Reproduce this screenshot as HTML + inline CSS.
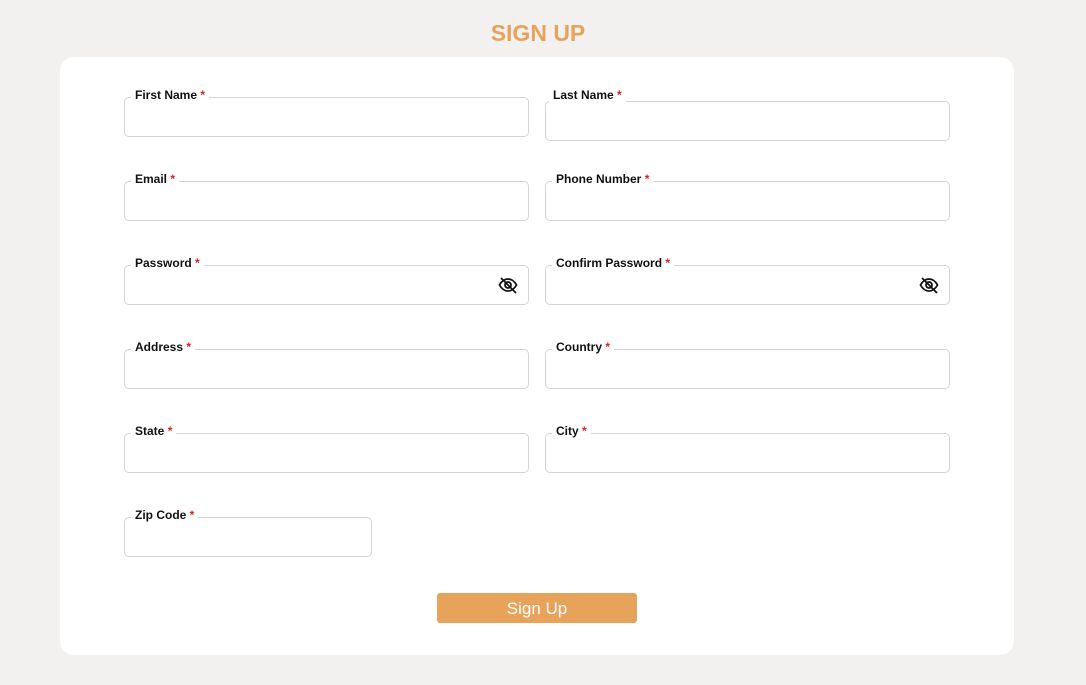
<!DOCTYPE html>
<html><head><style>
body{margin:0;width:1086px;height:685px;background:#f2f1f0;font-family:"Liberation Sans",sans-serif;position:relative;overflow:hidden}
h1{position:absolute;top:19px;left:-5px;width:1086px;text-align:center;margin:0;font-size:23px;color:#e8a35a;font-weight:bold;line-height:28px}
.card{position:absolute;left:60px;top:57px;width:954px;height:598px;background:#fff;border-radius:14px}
.f{position:absolute;height:38px;border:1px solid #d4d4d4;border-radius:5px;background:#fff}
.l{position:absolute;background:#fff;padding:0 4px;font-size:12px;font-weight:bold;color:#111;line-height:14px}
.l span{color:#e02020}
.eye{position:absolute;right:10px;top:10px}
.btn{position:absolute;left:437px;top:593px;width:200px;height:30px;background:#e8a35a;border-radius:3px;color:#fff;font-size:17px;text-align:center;line-height:32px}
</style></head><body>
<h1>SIGN UP</h1>
<div class="card"></div>

<div class="f" style="left:124px;top:97px;width:403px"></div><div class="l" style="left:131px;top:88px">First Name <span>*</span></div>
<div class="f" style="left:545px;top:101px;width:403px"></div><div class="l" style="left:549px;top:88px">Last Name <span>*</span></div>

<div class="f" style="left:124px;top:181px;width:403px"></div><div class="l" style="left:131px;top:172px">Email <span>*</span></div>
<div class="f" style="left:545px;top:181px;width:403px"></div><div class="l" style="left:552px;top:172px">Phone Number <span>*</span></div>

<div class="f" style="left:124px;top:265px;width:403px"><svg class="eye" width="20" height="18" viewBox="0 0 20 18" fill="none" stroke="#111" stroke-width="1.8"><path d="M1.5 9C4 4.5 7 3 10 3s6 1.5 8.5 6C16 13.5 13 15 10 15S4 13.5 1.5 9z"/><circle cx="10" cy="9" r="3"/><path d="M3 2l15 15"/></svg></div><div class="l" style="left:131px;top:256px">Password <span>*</span></div>
<div class="f" style="left:545px;top:265px;width:403px"><svg class="eye" width="20" height="18" viewBox="0 0 20 18" fill="none" stroke="#111" stroke-width="1.8"><path d="M1.5 9C4 4.5 7 3 10 3s6 1.5 8.5 6C16 13.5 13 15 10 15S4 13.5 1.5 9z"/><circle cx="10" cy="9" r="3"/><path d="M3 2l15 15"/></svg></div><div class="l" style="left:552px;top:256px">Confirm Password <span>*</span></div>

<div class="f" style="left:124px;top:349px;width:403px"></div><div class="l" style="left:131px;top:340px">Address <span>*</span></div>
<div class="f" style="left:545px;top:349px;width:403px"></div><div class="l" style="left:552px;top:340px">Country <span>*</span></div>

<div class="f" style="left:124px;top:433px;width:403px"></div><div class="l" style="left:131px;top:424px">State <span>*</span></div>
<div class="f" style="left:545px;top:433px;width:403px"></div><div class="l" style="left:552px;top:424px">City <span>*</span></div>

<div class="f" style="left:124px;top:517px;width:246px"></div><div class="l" style="left:131px;top:508px">Zip Code <span>*</span></div>

<div class="btn">Sign Up</div>
</body></html>
